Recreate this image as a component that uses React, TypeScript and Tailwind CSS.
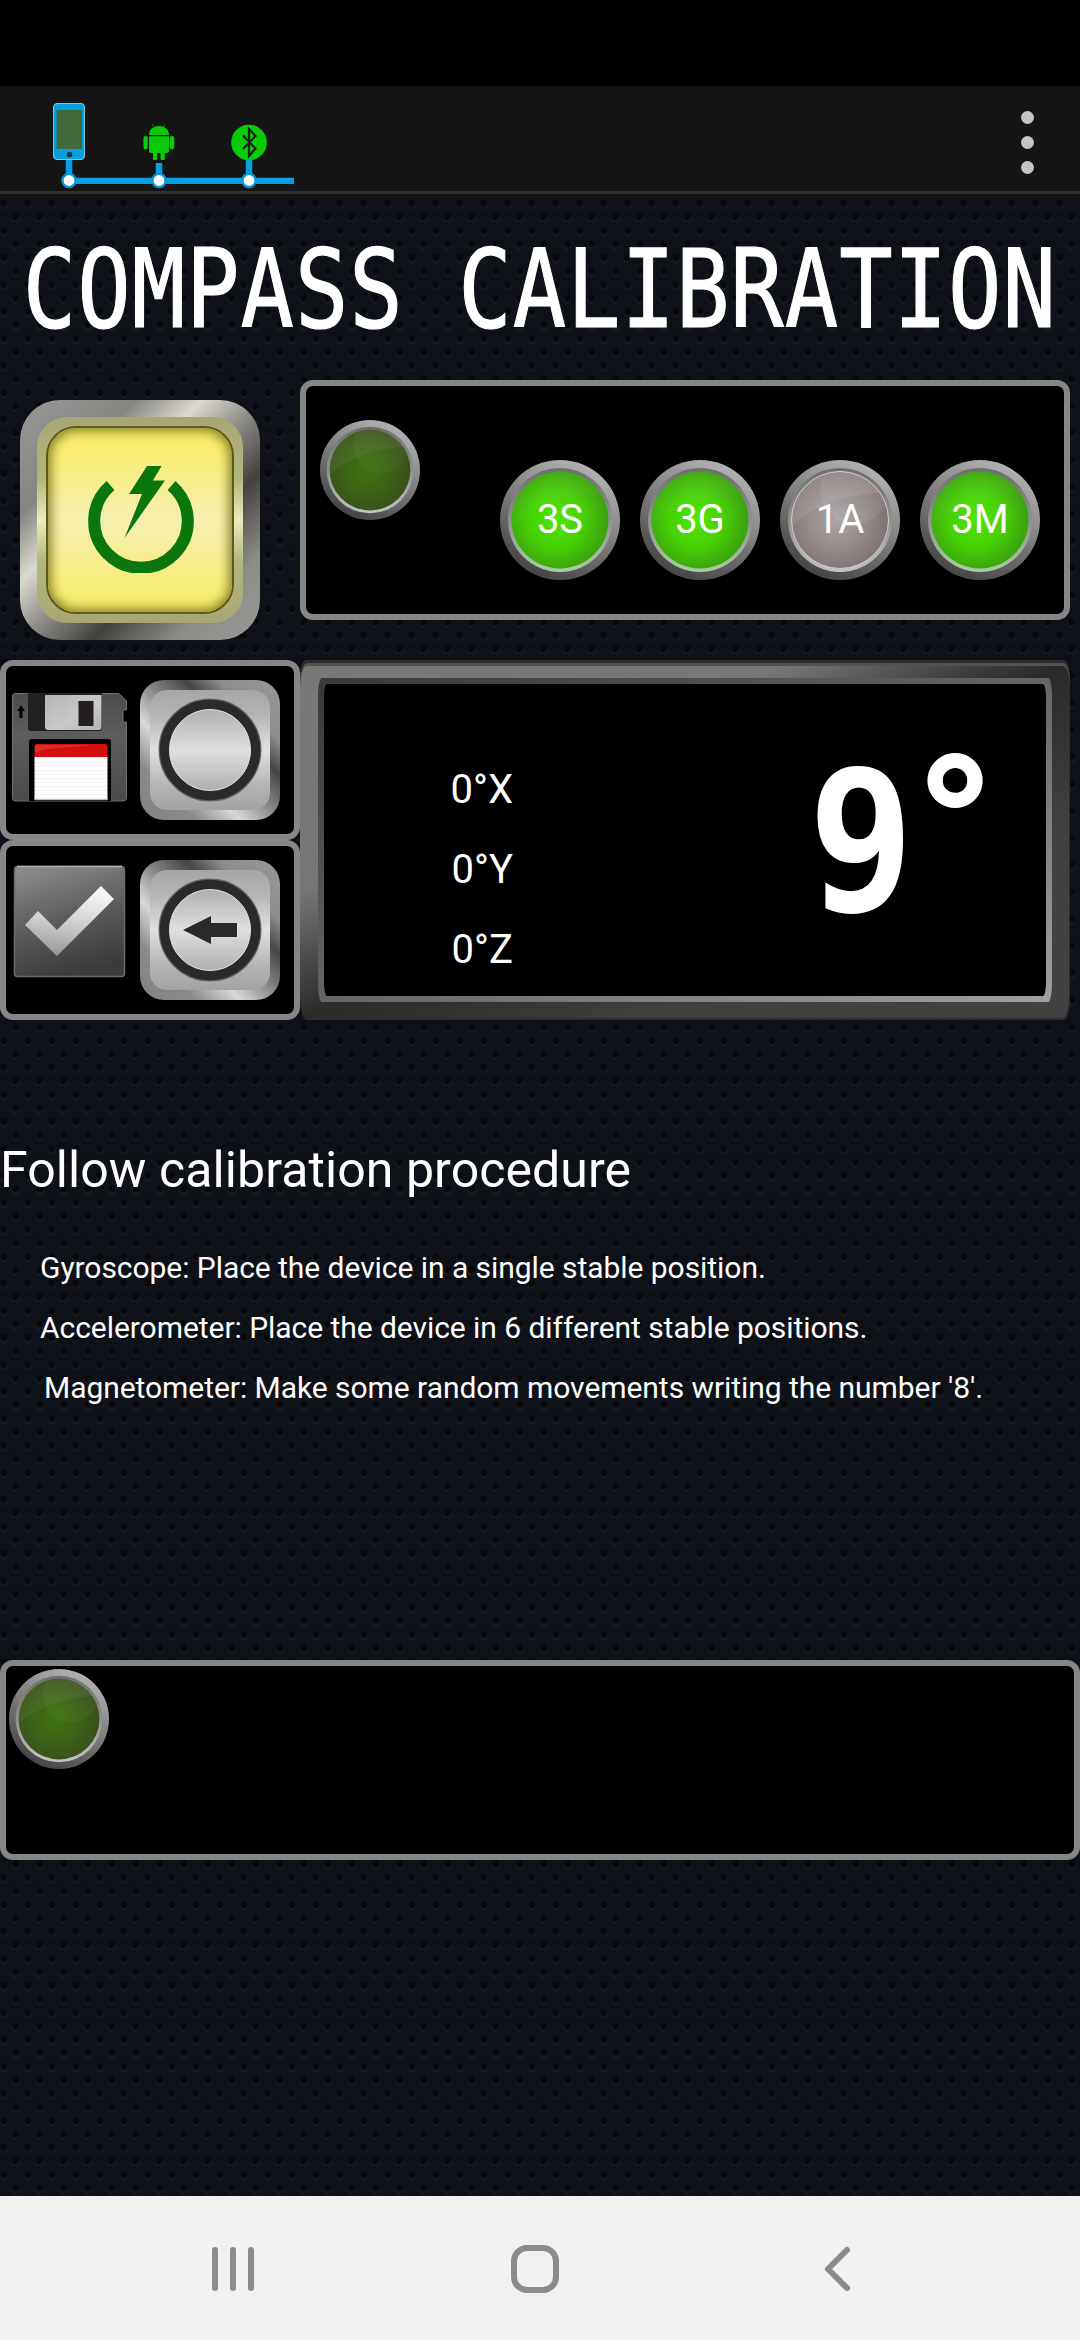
import React from "react";

function Led({ id, size, tone, label }: { id: string; size: number; tone: "on" | "dim" | "off"; label?: string }) {
  const colors = {
    on: ["#4ee602", "#46d004", "#3a9c10"],
    dim: ["#3d7410", "#3b6416", "#3a4e1c"],
    off: ["#aca6a6", "#968c8c", "#7e7070"],
  }[tone];
  const rimLight = tone === "on" ? "#a9cfa2" : "#c4c4c4";
  const gloss = tone === "off" ? 0.1 : tone === "dim" ? 0.05 : 0.03;
  return (
    <div className="relative grid shrink-0 place-items-center" style={{ width: size, height: size }}>
      <svg viewBox="0 0 120 120" className="col-start-1 row-start-1 size-full">
        <defs>
          <linearGradient id={id + "-outer"} x1="0.75" y1="0.05" x2="0.3" y2="0.95">
            <stop offset="0" stopColor="#b2b2b2" />
            <stop offset="0.5" stopColor="#7c7c7c" />
            <stop offset="1" stopColor="#464646" />
          </linearGradient>
          <linearGradient id={id + "-rim"} x1="0.5" y1="0" x2="0.5" y2="1">
            <stop offset="0" stopColor="#6e6e6e" />
            <stop offset="0.5" stopColor="#8f928f" />
            <stop offset="1" stopColor={rimLight} />
          </linearGradient>
          <radialGradient id={id + "-face"} cx="0.46" cy="0.5" r="0.56">
            <stop offset="0" stopColor={colors[0]} />
            <stop offset="0.5" stopColor={colors[1]} />
            <stop offset="1" stopColor={colors[2]} />
          </radialGradient>
          <clipPath id={id + "-clip"}>
            <circle cx="60" cy="60" r="48.5" />
          </clipPath>
        </defs>
        <circle cx="60" cy="60" r="60" fill={`url(#${id}-outer)`} />
        <circle cx="60" cy="60" r="52" fill={`url(#${id}-rim)`} />
        <circle cx="60" cy="60" r="48.5" fill={`url(#${id}-face)`} />
        {tone === "off" && <circle cx="60" cy="60" r="48.5" fill="none" stroke="#d4d0d0" strokeWidth="1" />}
        <g clipPath={`url(#${id}-clip)`} fill="#fff">
          <path d="M0 78C24 48 64 32 120 32V0H0Z" opacity={gloss} />
          <circle cx="74" cy="30" r="34" opacity={gloss * 0.7} />
        </g>
      </svg>
      {label && (
        <span className="z-10 col-start-1 row-start-1 text-[40px] leading-none text-white">{label}</span>
      )}
    </div>
  );
}

function MetalButton({ arrow }: { arrow?: boolean }) {
  return (
    <button className="size-[140px] shrink-0 rounded-[24px] bg-[linear-gradient(45deg,#828282_0%,#8a8a8a_20%,#d9d7d8_36%,#8e8c8c_50%,#484644_66%,#8c8c8c_78%,#999_100%)] p-[10px]">
      <div className="grid size-full place-items-center rounded-[17px] bg-[linear-gradient(180deg,#a6a6a6_0%,#b4b4b4_20%,#e0e0e0_50%,#b4b4b4_80%,#a3a3a3_100%)]">
        <svg viewBox="0 0 120 120" className="size-[120px]">
          <circle cx="60" cy="60" r="50.5" fill="none" stroke="#666" strokeWidth="2" />
          <circle cx="60" cy="60" r="45.5" fill="none" stroke="#2b2a29" strokeWidth="9.5" />
          <circle cx="60" cy="60" r="40.5" fill="none" stroke="#dcdcdc" strokeWidth="1" />
          {arrow && <path d="M33 60L61 46V53H87V67H61V74Z" fill="#2b2a29" />}
        </svg>
      </div>
    </button>
  );
}

function Floppy() {
  return (
    <svg viewBox="0 0 115 109" className="h-[109px] w-[115px]">
      <defs>
        <linearGradient id="floppy-body" x1="0" y1="0" x2="0" y2="1">
          <stop offset="0" stopColor="#4c4d4f" />
          <stop offset="0.4" stopColor="#5c5d5f" />
          <stop offset="1" stopColor="#4a4a4c" />
        </linearGradient>
        <linearGradient id="floppy-shutter" x1="0" y1="0" x2="1" y2="1">
          <stop offset="0" stopColor="#b4b4b4" />
          <stop offset="0.6" stopColor="#c9c9c9" />
          <stop offset="1" stopColor="#b2b2b2" />
        </linearGradient>
      </defs>
      <path d="M3 .5H107L114.500 8V17H111V29H114.500V105Q114.500 108 111 108H3Q.5 108 .5 105V3Q.5 .5 3 .5Z" fill="url(#floppy-body)" stroke="#707174" strokeWidth="1" />
      <path d="M16 0H90V35Q90 38 87 38H19Q16 38 16 35Z" fill="#232021" />
      <path d="M33 2H89.500V34Q89.500 37 86.500 37H36Q33 37 33 34Z" fill="url(#floppy-shutter)" />
      <rect x="66.500" y="8" width="15" height="25" fill="#231f20" />
      <path d="M9 12L13 18H10.500V25H7.500V18H5Z" fill="#000" />
      <path d="M17 49Q17 46 20 46H96Q99 46 99 49V108H17Z" fill="#000" />
      <path d="M22.500 53Q22.500 51 25 51H93Q95.500 51 95.500 53V64H22.500Z" fill="#d30f10" />
      <path d="M24 52H82Q60 54 46 55Q30 56 23 60V54Z" fill="#e34a48" opacity=".5" />
      <rect x="22.500" y="64" width="73" height="43" fill="#fff" />
      {[69, 73, 77, 81, 85, 89, 93, 97, 101].map((y) => (
        <path key={y} d={`M23 ${y}.5H95`} stroke="#f1f1f1" strokeWidth="1" />
      ))}
      <path d="M22.500 106.500H95.500" stroke="#bbb" strokeWidth="1.500" />
    </svg>
  );
}

function CheckTile() {
  return (
    <svg viewBox="0 0 113 113" className="size-[113px]">
      <defs>
        <linearGradient id="check-tile" x1="0.2" y1="0" x2="0.5" y2="1">
          <stop offset="0" stopColor="#8b8b8b" />
          <stop offset="0.5" stopColor="#5c5c5c" />
          <stop offset="1" stopColor="#3b3b3b" />
        </linearGradient>
        <linearGradient id="check-mark" x1="0.6" y1="0" x2="0.4" y2="1">
          <stop offset="0" stopColor="#fafafa" />
          <stop offset="0.5" stopColor="#d2d2d2" />
          <stop offset="1" stopColor="#979797" />
        </linearGradient>
      </defs>
      <rect x="1.500" y="1.500" width="110" height="110" rx="3" fill="url(#check-tile)" stroke="#6b6b6b" strokeWidth="1.500" />
      <path d="M4 1.500H109" stroke="#b5b5b5" strokeWidth="1.500" />
      <path d="M12 60L25 46L44 65L88 21L101 34L44 91Z" fill="url(#check-mark)" />
    </svg>
  );
}

function PowerButton() {
  return (
    <button className="size-[240px] shrink-0 rounded-[40px] bg-[linear-gradient(135deg,#989898_0%,#858581_24%,#dcd9d0_38%,#918f8b_50%,#44423e_65%,#8c8c86_82%,#999_100%)] p-[17px]">
      <div className="size-full rounded-[30px] bg-[linear-gradient(180deg,#a7a775_0%,#b4b67e_30%,#e9ecbb_50%,#b4b67e_70%,#a7a775_100%)] p-[9px]">
        <div className="grid size-full place-items-center rounded-[30px] border-2 border-[#5e5a19] bg-[linear-gradient(180deg,#f9ec6c_0%,#f9ec70_12%,#f5efb0_50%,#f9ec76_88%,#f9ec6c_100%)] shadow-[inset_0_0_11px_3px_#7f7c25]">
          <svg viewBox="0 0 106 108" className="mb-[2px] ml-px h-[108px] w-[106px]">
            <path d="M22.500 20.500A46.800 46.800 0 1 0 83.500 20.500" fill="none" stroke="#0b760d" strokeWidth="12" />
            <path d="M59 1H73.500L65 15.500H77L36.500 73L54 29H41Z" fill="#0b760d" />
          </svg>
        </div>
      </div>
    </button>
  );
}

function Header() {
  return (
    <header className="flex h-[108px] items-start justify-between border-b-[3px] border-[#303030] bg-[#151515]">
      <svg viewBox="0 86 300 105" className="h-[105px] w-[300px]">
        <rect x="53.500" y="103.500" width="31" height="56" rx="3.500" fill="#069fe2" stroke="#8fc0d8" strokeWidth="1" />
        <rect x="56.500" y="110" width="25.500" height="39" rx="1" fill="#406a3b" />
        <circle cx="69.500" cy="154.500" r="2.800" fill="#23333c" />
        <path d="M69 160V180M159 163V180M249 159V180" stroke="#069fe2" strokeWidth="6.500" />
        <path d="M69 180.800H294" stroke="#069fe2" strokeWidth="6.200" />
        {[69, 159, 249].map((x) => (
          <circle key={x} cx={x} cy="180.500" r="6.600" fill="#fff" stroke="#0b96d3" strokeWidth="2.400" />
        ))}
        <g fill="#0acb0a">
          <path d="M149 135C149 123 169 123 169 135Z" />
          <path d="M149 136.300H169V150.500Q169 153 166.500 153H151.500Q149 153 149 150.500Z" />
          <rect x="143.500" y="136" width="4.300" height="13.500" rx="2" />
          <rect x="170" y="136" width="4.300" height="13.500" rx="2" />
          <rect x="153" y="150" width="4.300" height="10" rx="1" />
          <rect x="160.500" y="150" width="4.300" height="10" rx="1" />
          <path d="M152.500 124.500L154.500 128M165 124.500L163 128" stroke="#0a9a0a" strokeWidth="1" />
          <circle cx="249" cy="142.500" r="17.800" />
        </g>
        <path d="M243 135.500L255.500 148.500L249 156V129L255.500 136L243 149" fill="none" stroke="#122312" strokeWidth="2.200" />
      </svg>
      <div className="mt-[25px] mr-[46px] flex flex-col gap-[12px]">
        <i className="size-[13px] rounded-full bg-[#c4c4c4]" />
        <i className="size-[13px] rounded-full bg-[#c4c4c4]" />
        <i className="size-[13px] rounded-full bg-[#c4c4c4]" />
      </div>
    </header>
  );
}

export default function App() {
  const panel = "rounded-[13px] border-[6px] border-[#868686] bg-black";
  return (
    <div className="flex h-[2340px] w-[1080px] flex-col overflow-hidden bg-black font-['Roboto',sans-serif] text-white">
      <div className="h-[86px] shrink-0" />
      <Header />
      <div className="h-[6px] shrink-0 bg-[#141414]" />
      <main className="flex min-h-0 flex-1 flex-col bg-[#0f1118] bg-[radial-gradient(circle_at_15.700px_17px,#07080c_0,#07080c_2.500px,transparent_4.500px),radial-gradient(circle_at_15.700px_18.500px,#171a21_0,#171a21_3.500px,transparent_5px),radial-gradient(circle_at_3.700px_3.500px,#07080c_0,#07080c_2.500px,transparent_4.500px),radial-gradient(circle_at_3.700px_5px,#171a21_0,#171a21_3.500px,transparent_5px)] bg-[length:24px_27px]">
        <h1 className="h-[180px] shrink-0 origin-left scale-x-[0.8145] pt-[25px] pl-[28px] font-['DejaVu_Sans_Mono',monospace] text-[109px] leading-[130px] tracking-[1.200px] whitespace-pre [-webkit-text-stroke:1.200px_white]">
          COMPASS CALIBRATION
        </h1>

        <section className="flex h-[280px] shrink-0 items-start">
          <div className="w-[300px] pt-[20px] pl-[20px]">
            <PowerButton />
          </div>
          <div className={`flex h-[240px] w-[770px] items-start ${panel}`}>
            <div className="mt-[34px] ml-[14px]">
              <Led id="s1" size={100} tone="dim" />
            </div>
            <div className="mt-[74px] ml-[80px] flex gap-[20px]">
              <Led id="a" size={120} tone="on" label="3S" />
              <Led id="b" size={120} tone="on" label="3G" />
              <Led id="c" size={120} tone="off" label="1A" />
              <Led id="d" size={120} tone="on" label="3M" />
            </div>
          </div>
        </section>

        <section className="flex h-[360px] shrink-0">
          <div className="w-[300px]">
            <div className={`flex h-[180px] items-start pt-[14px] pr-[14px] pl-[6px] ${panel}`}>
              <div className="mt-[13px] mr-[13px]">
                <Floppy />
              </div>
              <MetalButton />
            </div>
            <div className={`flex h-[180px] items-start pt-[14px] pr-[14px] pl-[7px] ${panel}`}>
              <div className="mt-[5px] mr-[14px]">
                <CheckTile />
              </div>
              <MetalButton arrow />
            </div>
          </div>
          <div className="h-[360px] w-[770px] rounded-[7px/22px] bg-[linear-gradient(to_bottom_right,#787878_0%,#777_32%,#2b2929_50%,#404040_72%,#424242_100%)] p-[18px] shadow-[inset_0_3px_0_#2d2d2b,inset_0_6px_0_#52524f,inset_-1px_-2px_0_#2e2e2e]">
            <div className="size-full rounded-[4px/18px] bg-[linear-gradient(to_bottom_right,#3a363a,#666467_50%,#a0a0a0)] p-[6px]">
              <div className="flex size-full items-start rounded-[3px/14px] bg-black">
                <div className="mt-[66px] w-[189px] text-right text-[40px] leading-[80px]">
                  <p>0°X</p>
                  <p>0°Y</p>
                  <p>0°Z</p>
                </div>
                <div className="mt-[58px] ml-[295px] flex items-start">
                  <span className="w-[107px] origin-left scale-x-[0.9] font-['DejaVu_Sans_Mono',monospace] text-[196px] leading-[200px] font-bold">9</span>
                  <span className="text-[203px] leading-[176px] font-black">°</span>
                </div>
              </div>
            </div>
          </div>
        </section>

        <section className="h-[640px] shrink-0 pt-[120px]">
          <h2 className="text-[50px] leading-[60px] tracking-[0.080px]">Follow calibration procedure</h2>
          <div className="mt-[38px] text-[30px] leading-[60px] tracking-[-0.050px] whitespace-nowrap">
            <p className="pl-[40px]">Gyroscope: Place the device in a single stable position.</p>
            <p className="pl-[40px]">Accelerometer: Place the device in 6 different stable positions.</p>
            <p className="pl-[44px]">Magnetometer: Make some random movements writing the number '8'.</p>
          </div>
        </section>

        <section className={`h-[200px] shrink-0 pt-[3px] pl-[3px] ${panel}`}>
          <Led id="s2" size={100} tone="dim" />
        </section>
      </main>

      <nav className="h-[144px] shrink-0 bg-[#f1f1f1]">
        <svg viewBox="0 0 1080 144" className="h-[144px] w-[1080px]" fill="none" stroke="#8b8b8b" strokeWidth="6" strokeLinecap="round">
          <path d="M215 70V108M233 70V108M251 70V108" transform="translate(0 -16)" />
          <rect x="514" y="52" width="42" height="42" rx="13" />
          <path d="M847 54L828 73L847 92" strokeLinejoin="round" />
        </svg>
      </nav>
    </div>
  );
}
